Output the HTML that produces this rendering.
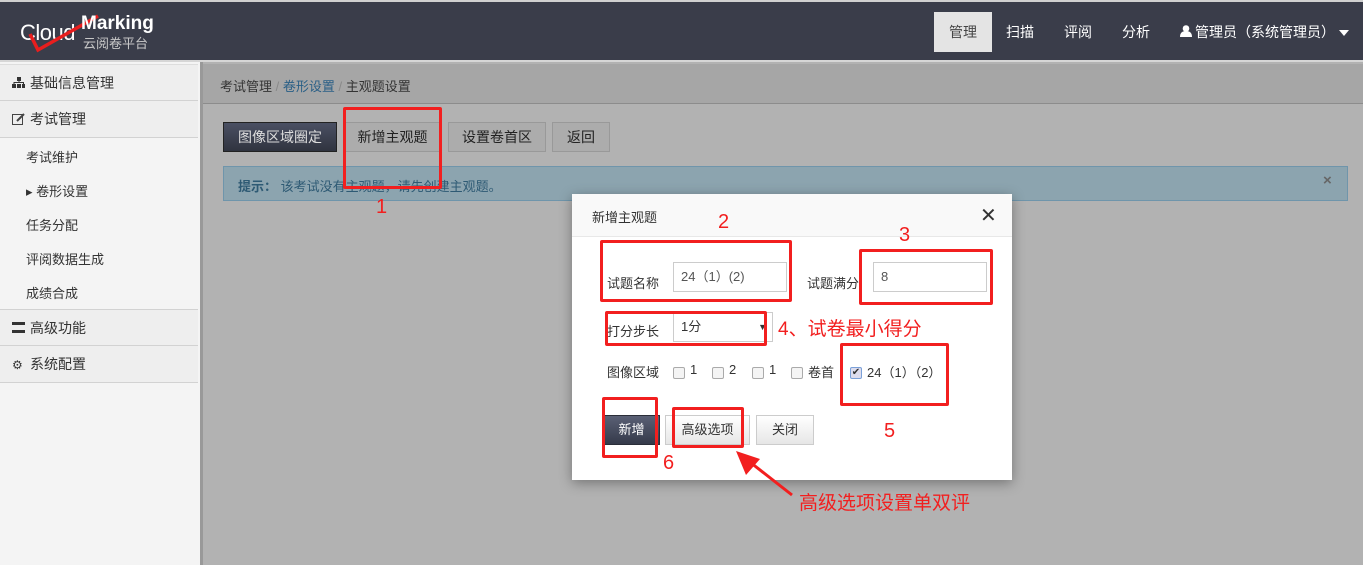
<!DOCTYPE html>
<html><head><meta charset="utf-8"><style>
*{margin:0;padding:0;box-sizing:border-box}
body{width:1363px;height:565px;overflow:hidden;position:relative;background:#b2b2b2;font-family:"Liberation Sans","Noto Sans CJK SC",sans-serif;font-size:13px;color:#333}
.a{position:absolute}
.hdr{left:0;top:0;width:1363px;height:62px;background:#3a3d4a;border-top:2px solid #d0d0d0;border-bottom:2px solid #d6d6d6}
.nav{color:#fff;font-size:14px;top:22px}
.side{left:0;top:62px;width:200px;height:503px;background:#f4f4f4}
.sitem{left:0;width:198px;height:37px;border-bottom:1px solid #d2d2d2;background:#eee;font-size:14px;line-height:37px;padding-left:30px}
.sub{left:26px;font-size:13px;color:#333}
.btn{height:30px;top:122px;border:1px solid #999;background:#acacac;font-size:14px;line-height:28px;text-align:center;color:#222}
.red{position:absolute;border:3px solid #f21f1f;border-radius:2px}
.rt{position:absolute;color:#f21f1f;font-size:20px}
.inp{border:1px solid #ccc;background:#fff;height:30px;font-size:13px;line-height:28px;padding-left:7px;color:#555}
.cb{width:12px;height:12px;border:1px solid #aaa;border-radius:2px;background:#f4f4f4;top:367px}
.mb{height:30px;top:415px;font-size:13px;line-height:28px;text-align:center;border:1px solid #ccc;background:linear-gradient(#fff,#e6e6e6)}
</style></head><body>
<div class="a hdr"></div>
<div class="a" style="left:20px;top:20px;color:#fff;font-size:22px;font-weight:300;letter-spacing:-0.5px">Cloud</div>
<svg class="a" style="left:20px;top:12px" width="90" height="42"><path d="M10 22 L18 38 L78 4" stroke="#e81e1e" stroke-width="3.5" fill="none"/></svg>
<div class="a" style="left:81px;top:13px;color:#fff;font-size:19px;font-weight:bold">Marking</div>
<div class="a" style="left:83px;top:33px;color:#c8c8c8;font-size:13px">云阅卷平台</div>
<div class="a" style="left:934px;top:12px;width:58px;height:40px;background:#e4e4e4"></div>
<div class="a nav" style="left:949px;color:#444">管理</div>
<div class="a nav" style="left:1006px">扫描</div>
<div class="a nav" style="left:1064px">评阅</div>
<div class="a nav" style="left:1122px">分析</div>
<svg class="a" style="left:1180px;top:25px" width="12" height="12"><circle cx="6" cy="3.5" r="3.3" fill="#fff"/><path d="M0 12 Q0 6 6 6 Q12 6 12 12 Z" fill="#fff"/></svg>
<div class="a nav" style="left:1195px">管理员（系统管理员）</div>
<div class="a" style="left:1339px;top:30px;width:0;height:0;border-left:5px solid transparent;border-right:5px solid transparent;border-top:6px solid #fff"></div>

<div class="a side"></div>
<div class="a sitem" style="top:64px;border-top:1px solid #ddd">基础信息管理</div>
<div class="a sitem" style="top:101px">考试管理</div>
<svg class="a" style="left:12px;top:77px" width="13" height="12"><rect x="5" y="0" width="4" height="4" fill="#333"/><rect x="0" y="7" width="4" height="4" fill="#333"/><rect x="5" y="7" width="4" height="4" fill="#333"/><rect x="10" y="7" width="3" height="4" fill="#333"/><path d="M7 4V6M2 7V5.5H11.5V7" stroke="#333" fill="none"/></svg>
<svg class="a" style="left:12px;top:113px" width="13" height="12"><rect x="0.5" y="1.5" width="10" height="10" stroke="#444" fill="none"/><path d="M5 8 L12 1" stroke="#444" stroke-width="2"/></svg>
<div class="a sub" style="top:147px">考试维护</div>
<div class="a sub" style="top:181px;left:26px">▸ 卷形设置</div>
<div class="a sub" style="top:215px">任务分配</div>
<div class="a sub" style="top:249px">评阅数据生成</div>
<div class="a sub" style="top:283px">成绩合成</div>
<div class="a sitem" style="top:309px;border-top:1px solid #d2d2d2">高级功能</div>
<div class="a sitem" style="top:346px">系统配置</div>
<div class="a" style="left:12px;top:322px;width:13px;height:11px;border-top:3px solid #333;border-bottom:3px solid #333"></div>
<div class="a" style="left:12px;top:358px;font-size:12px">⚙</div>
<div class="a" style="left:200px;top:62px;width:3px;height:503px;background:#999"></div>

<div class="a" style="left:203px;top:64px;width:1160px;height:40px;background:#a6a6a6;border-bottom:1px solid #8c8c8c"></div>
<div class="a" style="left:220px;top:76px;font-size:13px;color:#333">考试管理 <span style="color:#888">/</span> <span style="color:#2a5f86">卷形设置</span> <span style="color:#888">/</span> 主观题设置</div>
<div class="a btn" style="left:223px;width:114px;background:linear-gradient(#4a5063,#30343f);color:#ddd;border-color:#222">图像区域圈定</div>
<div class="a btn" style="left:345px;width:95px">新增主观题</div>
<div class="a btn" style="left:448px;width:98px">设置卷首区</div>
<div class="a btn" style="left:552px;width:58px">返回</div>
<div class="a" style="left:223px;top:166px;width:1125px;height:35px;background:#8ca4af;border:1px solid #6f95ab"></div>
<div class="a" style="left:238px;top:176px;color:#2e5a74;font-size:13px"><b>提示：</b> 该考试没有主观题，请先创建主观题。</div>
<div class="a" style="left:1323px;top:172px;color:#666;font-weight:bold;font-size:15px">×</div>
<div class="red" style="left:343px;top:107px;width:99px;height:82px"></div>
<div class="rt" style="left:376px;top:196px">1</div>

<div class="a" style="left:572px;top:194px;width:440px;height:286px;background:#fff;box-shadow:0 3px 12px rgba(0,0,0,.35)"></div>
<div class="a" style="left:572px;top:194px;width:440px;height:43px;background:#f9f9f9;border-bottom:1px solid #e8e8e8"></div>
<div class="a" style="left:592px;top:207px;font-size:13px">新增主观题</div>
<div class="a" style="left:980px;top:203px;font-size:20px;color:#333">✕</div>
<div class="a" style="left:607px;top:273px">试题名称</div>
<div class="a inp" style="left:673px;top:262px;width:114px">24（1）(2)</div>
<div class="a" style="left:807px;top:273px">试题满分</div>
<div class="a inp" style="left:873px;top:262px;width:114px">8</div>
<div class="a" style="left:607px;top:321px">打分步长</div>
<div class="a inp" style="left:673px;top:312px;width:100px;color:#333">1分<span style="position:absolute;right:5px;font-size:9px">▼</span></div>
<div class="a" style="left:607px;top:362px">图像区域</div>
<div class="a cb" style="left:673px"></div><div class="a" style="left:690px;top:362px">1</div>
<div class="a cb" style="left:712px"></div><div class="a" style="left:729px;top:362px">2</div>
<div class="a cb" style="left:752px"></div><div class="a" style="left:769px;top:362px">1</div>
<div class="a cb" style="left:791px"></div><div class="a" style="left:808px;top:362px">卷首</div>
<div class="a cb" style="left:850px;top:367px;border-color:#7aa0d8;background:#dde;font-size:10px;line-height:10px;text-align:center">✔</div>
<div class="a" style="left:867px;top:362px">24（1）（2）</div>
<div class="a mb" style="left:603px;width:57px;background:linear-gradient(#5a6075,#353a4a);color:#fff;border-color:#2a2d38">新增</div>
<div class="a mb" style="left:665px;width:85px">高级选项</div>
<div class="a mb" style="left:756px;width:58px">关闭</div>

<div class="red" style="left:600px;top:240px;width:192px;height:62px"></div>
<div class="rt" style="left:718px;top:211px">2</div>
<div class="red" style="left:859px;top:249px;width:134px;height:56px"></div>
<div class="rt" style="left:899px;top:224px">3</div>
<div class="red" style="left:605px;top:311px;width:162px;height:35px"></div>
<div class="rt" style="left:778px;top:314px;font-size:19px">4、试卷最小得分</div>
<div class="red" style="left:840px;top:343px;width:109px;height:63px"></div>
<div class="rt" style="left:884px;top:420px">5</div>
<div class="red" style="left:602px;top:397px;width:56px;height:61px"></div>
<div class="rt" style="left:663px;top:452px">6</div>
<div class="red" style="left:672px;top:407px;width:72px;height:41px"></div>
<svg class="a" style="left:730px;top:445px" width="70" height="60"><path d="M62 50 L16 14" stroke="#f21f1f" stroke-width="3"/><path d="M6 6 L30 14 L16 30 Z" fill="#f21f1f"/></svg>
<div class="rt" style="left:799px;top:488px;font-size:19px">高级选项设置单双评</div>
</body></html>
